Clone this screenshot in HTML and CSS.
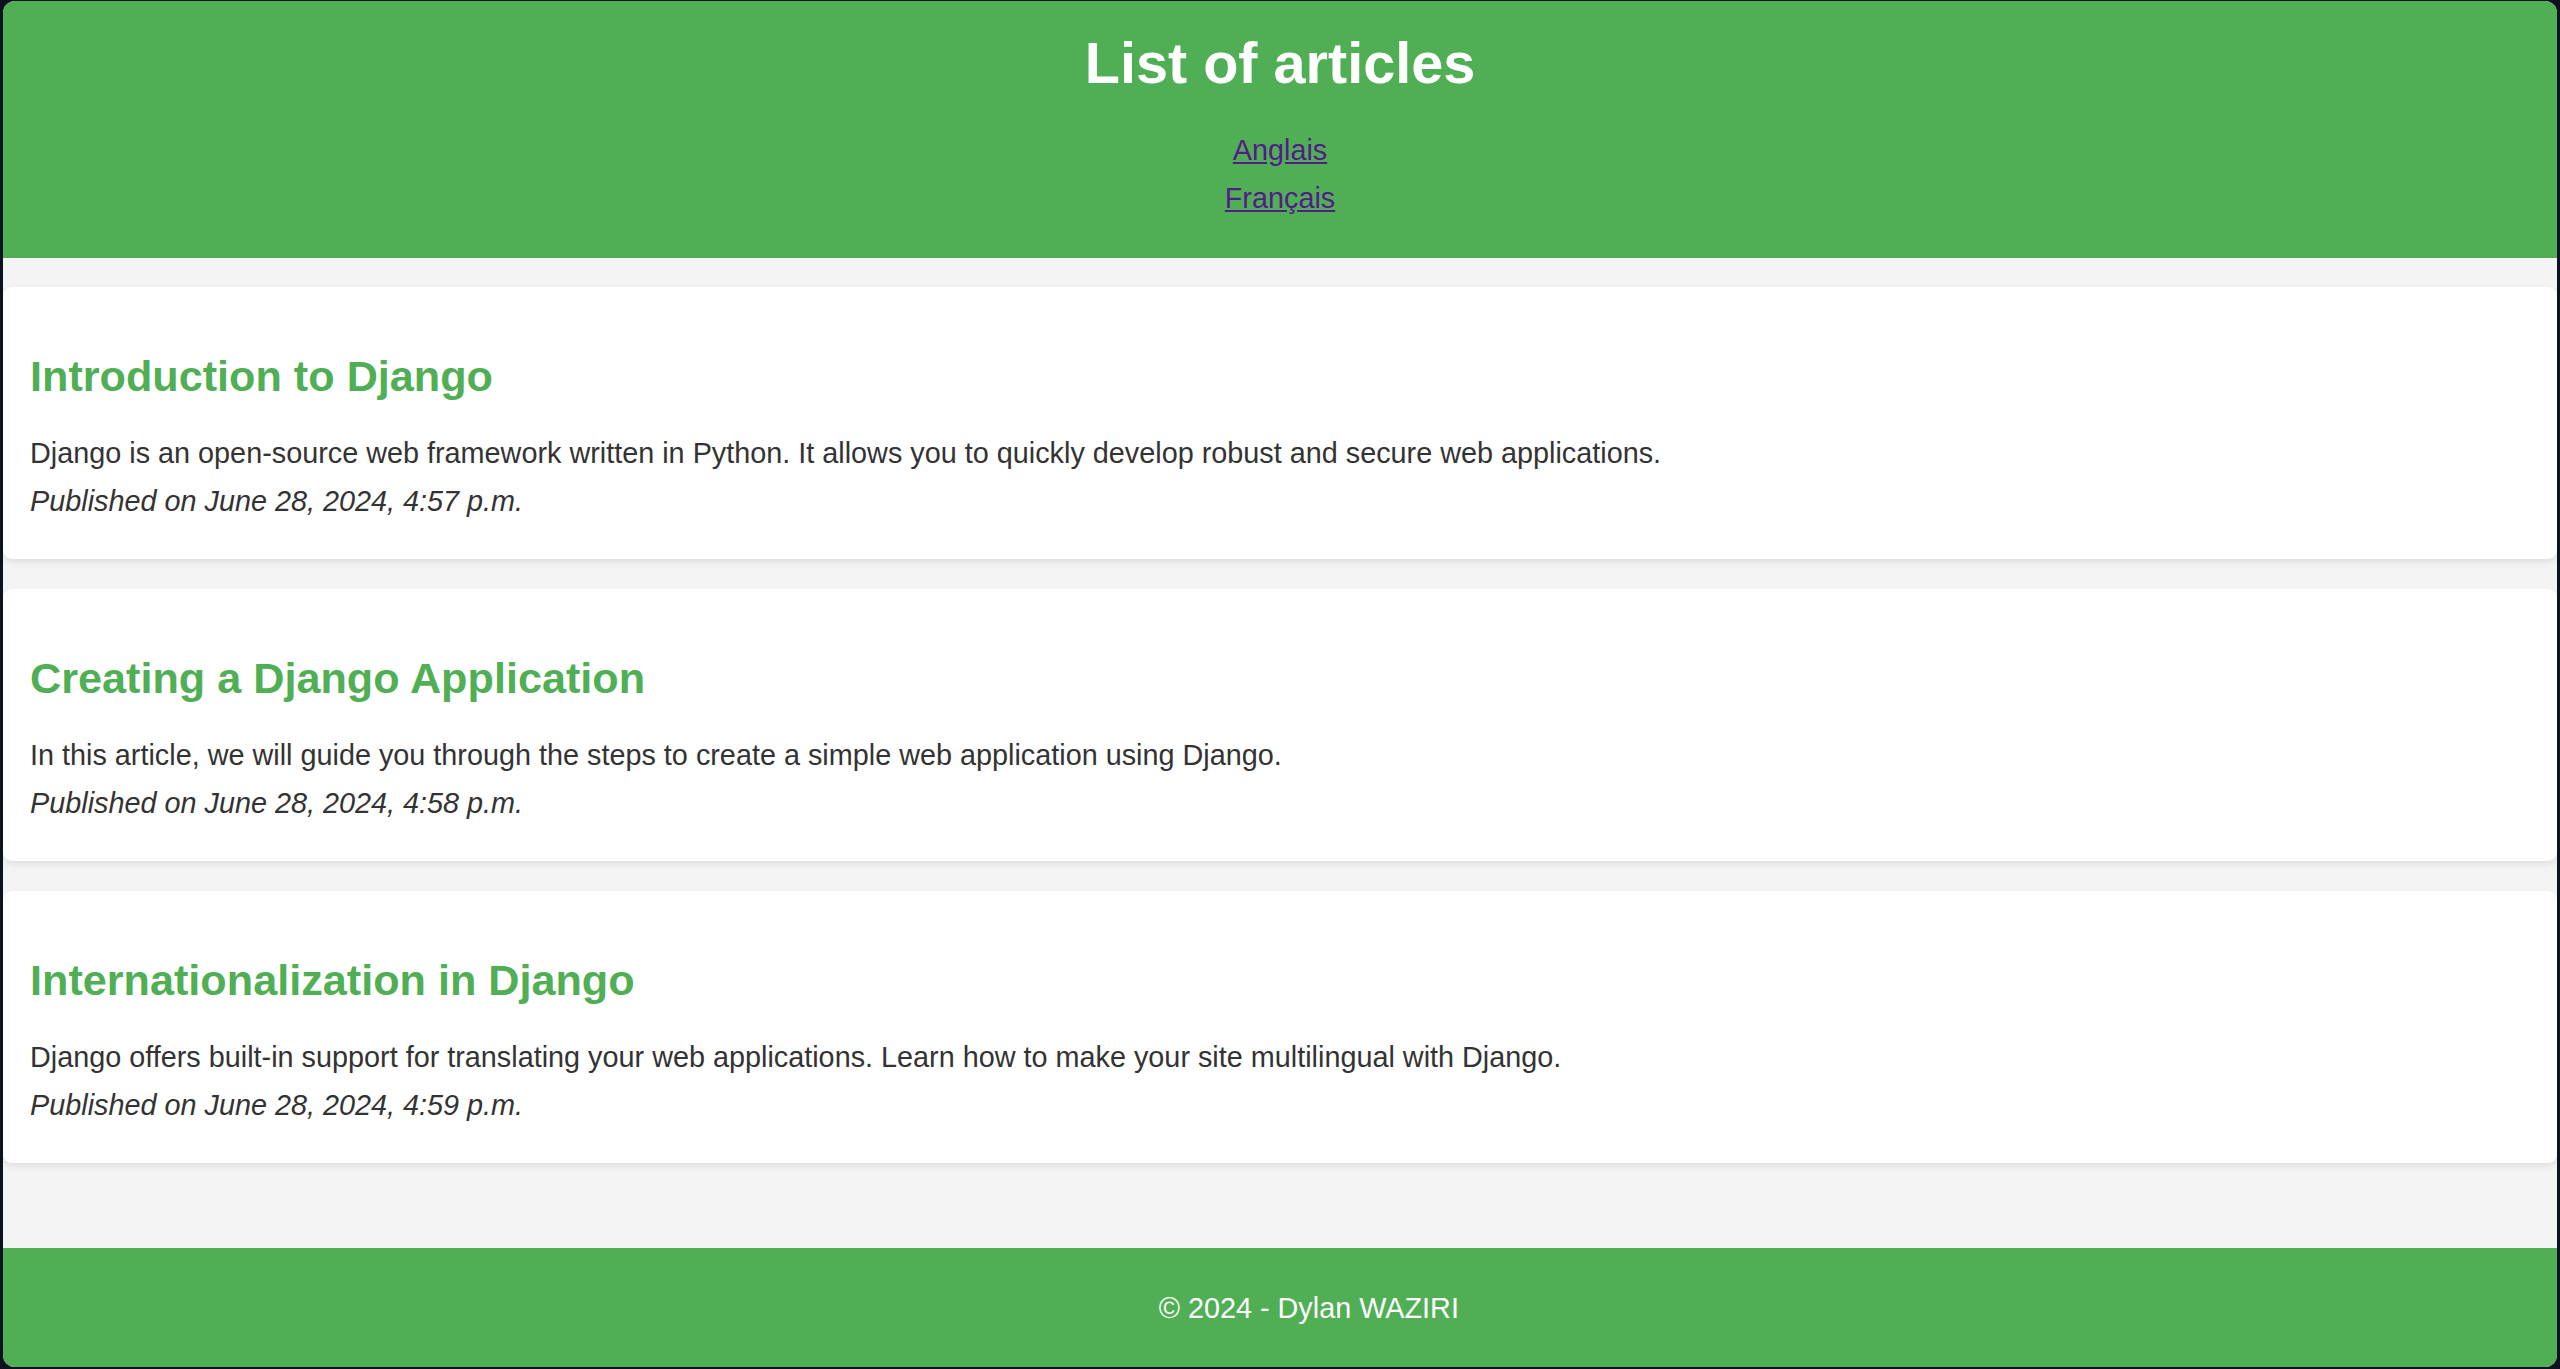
FILE: index.html
```html
<!DOCTYPE html>
<html lang="en">
<head>
<meta charset="utf-8">
<title>List of articles</title>
<link rel="stylesheet" href="styles.css">
</head>
<body>
<div class="window">
  <header class="site-header">
    <h1 class="site-title">List of articles</h1>
    <nav class="lang-links">
      <a class="lang-link" href="#">Anglais</a>
      <a class="lang-link" href="#">Français</a>
    </nav>
  </header>
  <main class="articles">
    <article class="card">
      <h2 class="card-title">Introduction to Django</h2>
      <p class="card-text">Django is an open-source web framework written in Python. It allows you to quickly develop robust and secure web applications.</p>
      <p class="card-date"><em>Published on June 28, 2024, 4:57 p.m.</em></p>
    </article>
    <article class="card">
      <h2 class="card-title">Creating a Django Application</h2>
      <p class="card-text">In this article, we will guide you through the steps to create a simple web application using Django.</p>
      <p class="card-date"><em>Published on June 28, 2024, 4:58 p.m.</em></p>
    </article>
    <article class="card">
      <h2 class="card-title">Internationalization in Django</h2>
      <p class="card-text">Django offers built-in support for translating your web applications. Learn how to make your site multilingual with Django.</p>
      <p class="card-date"><em>Published on June 28, 2024, 4:59 p.m.</em></p>
    </article>
  </main>
  <footer class="site-footer">
    <p class="footer-text">&copy; 2024 - Dylan WAZIRI</p>
  </footer>
</div>
</body>
</html>
```

FILE: styles.css
```css
html, body {
  margin: 0;
  padding: 0;
}

body {
  background: #0c1220;
  width: 2560px;
  height: 1369px;
  overflow: hidden;
  font-family: "Liberation Sans", Arial, Helvetica, sans-serif;
  font-size: 28.8px;
  color: #333333;
}

.window {
  margin: 1px 3px 2px 3px;
  height: 1366px;
  background: #f4f4f4;
  border-radius: 12px;
  overflow: hidden;
  display: flex;
  flex-direction: column;
}

.site-header {
  background: #50af55;
  color: #ffffff;
  text-align: center;
  padding: 29px 0 36.5px 0;
  height: 257px;
  box-sizing: border-box;
}

.site-title {
  margin: 0 0 29.5px 0;
  font-size: 57.6px;
  line-height: 66px;
  font-weight: bold;
}

.lang-links {
  display: flex;
  flex-direction: column;
  align-items: center;
}

.lang-link {
  display: block;
  color: #551a8b;
  text-decoration: underline;
  line-height: 48px;
  font-size: 28.8px;
}

.articles {
  padding: 29px 0 85px 0;
  display: flex;
  flex-direction: column;
  gap: 30px;
}

.card {
  background: #ffffff;
  border-radius: 9px;
  box-shadow: 0 3px 7px rgba(0, 0, 0, 0.09);
  padding: 27px 27px 34px 27px;
  height: 272px;
  box-sizing: border-box;
}

.card-title {
  margin: 37px 0 28px 0;
  color: #50af55;
  font-size: 43.2px;
  line-height: 50px;
  font-weight: bold;
}

.card-text,
.card-date {
  margin: 0;
  line-height: 48px;
}

.card-date em {
  font-style: italic;
}

.site-footer {
  background: #50af55;
  color: #ffffff;
  text-align: center;
  height: 119px;
  box-sizing: border-box;
  padding: 37px 0 0 57.6px;
}

.footer-text {
  margin: 0;
  line-height: 46px;
}
```
